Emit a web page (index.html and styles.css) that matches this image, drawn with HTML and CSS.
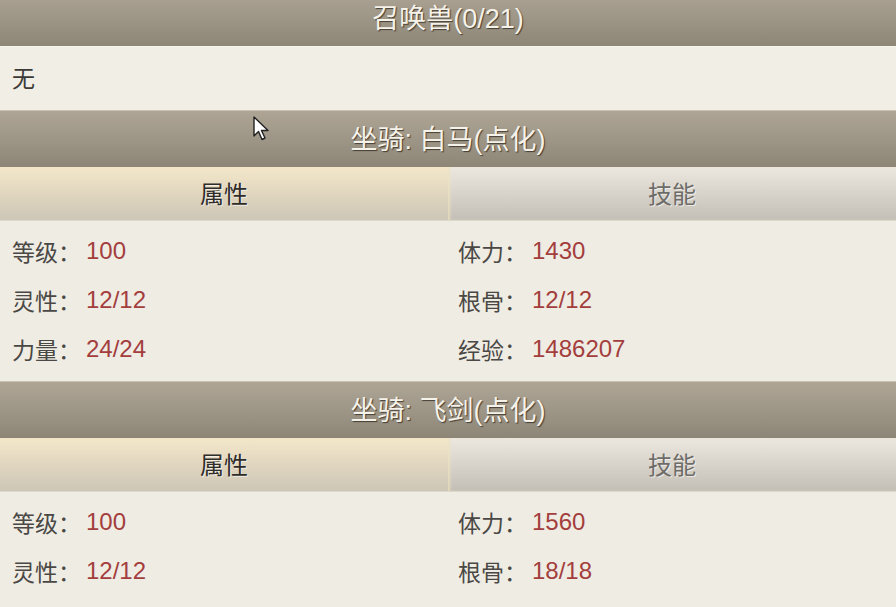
FILE: index.html
```html
<!DOCTYPE html>
<html lang="zh-CN">
<head>
    <meta charset="UTF-8">
    <meta name="viewport" content="width=device-width, initial-scale=1.0">
    <title>召唤兽与坐骑</title>
    <link rel="stylesheet" href="styles.css">
</head>
<body>
    <div class="panel">
        <div class="bar bar-first">召唤兽(0/21)</div>
        <div class="empty">无</div>

        <div class="bar">坐骑: 白马(点化)</div>
        <div class="tabs">
            <div class="tab active">属性</div>
            <div class="tab">技能</div>
        </div>
        <div class="stats">
            <div class="stat"><span class="label">等级：</span><span class="value">100</span></div>
            <div class="stat right"><span class="label">体力：</span><span class="value">1430</span></div>
            <div class="stat"><span class="label">灵性：</span><span class="value">12/12</span></div>
            <div class="stat right"><span class="label">根骨：</span><span class="value">12/12</span></div>
            <div class="stat"><span class="label">力量：</span><span class="value">24/24</span></div>
            <div class="stat right"><span class="label">经验：</span><span class="value">1486207</span></div>
        </div>

        <div class="bar">坐骑: 飞剑(点化)</div>
        <div class="tabs">
            <div class="tab active">属性</div>
            <div class="tab">技能</div>
        </div>
        <div class="stats">
            <div class="stat"><span class="label">等级：</span><span class="value">100</span></div>
            <div class="stat right"><span class="label">体力：</span><span class="value">1560</span></div>
            <div class="stat"><span class="label">灵性：</span><span class="value">12/12</span></div>
            <div class="stat right"><span class="label">根骨：</span><span class="value">18/18</span></div>
            <div class="stat"><span class="label">力量：</span><span class="value">24/24</span></div>
            <div class="stat right"><span class="label">经验：</span><span class="value">1486207</span></div>
        </div>
    </div>

    <!-- mouse pointer captured in the screenshot -->
    <svg class="pointer" width="18" height="26" viewBox="0 0 18 26">
        <path d="M1 1 L1 20 L5.5 15.5 L9 23.5 L12 22 L8.5 14.5 L15 14.5 Z" fill="#fff" stroke="#222" stroke-width="1.4" stroke-linejoin="round"/>
    </svg>
</body>
</html>
```

FILE: styles.css
```css
:root {
    --bar-top: #aea595;
    --bar-bottom: #8d8677;
    --bg: #efece4;
    --label: #4a4845;
    --value: #a33e3d;
}

html, body {
    margin: 0;
    padding: 0;
    overflow: hidden;
}

body {
    font-family: "Liberation Sans", "Noto Sans CJK SC", sans-serif;
    background-color: var(--bg);
    color: var(--label);
    width: 896px;
    height: 607px;
    position: relative;
}

.panel {
    display: flex;
    flex-direction: column;
}

.bar {
    height: 57px;
    display: flex;
    align-items: center;
    justify-content: center;
    padding-bottom: 4px;
    background: linear-gradient(to bottom, var(--bar-top), var(--bar-bottom));
    border-top: 1px solid #c9c1b2;
    box-sizing: border-box;
    color: #f5f2ea;
    font-size: 27px;
    text-shadow: 1px 1px 1px rgba(40, 34, 26, 0.75);
}

/* list is scrolled a little, first bar is cut at the top */
.bar-first {
    margin-top: -11px;
}

.empty {
    height: 64px;
    display: flex;
    align-items: center;
    padding-left: 12px;
    padding-bottom: 3px;
    font-size: 23px;
    color: #3c3a37;
    background-color: #f1eee6;
    border-top: 1px solid #f8f5ee;
    box-sizing: border-box;
}

.tabs {
    display: grid;
    grid-template-columns: 1fr 1fr;
    height: 53px;
    border-bottom: 1px solid #ddd8cc;
}

.tab {
    display: flex;
    align-items: center;
    justify-content: center;
    padding-bottom: 2px;
    font-size: 24px;
    color: #6e6c68;
    background: linear-gradient(to bottom, #ece8df, #c3bfb6);
    text-shadow: 1px 1px 0 rgba(255, 255, 255, 0.6);
}

.tab.active {
    color: #2f2d2a;
    background: linear-gradient(to bottom, #f4e7c9, #cdc6b6);
}

.tab + .tab {
    box-shadow: inset 3px 0 3px -1px rgba(240, 226, 190, 0.8);
}

.stats {
    display: grid;
    grid-template-columns: 1fr 1fr;
    grid-auto-rows: 49px;
    padding: 5px 0 8px;
}

.stat {
    display: flex;
    align-items: center;
    padding-left: 12px;
    font-size: 23px;
}

.stat.right {
    padding-left: 10px;
}

.label {
    color: var(--label);
}

.value {
    color: var(--value);
    font-size: 24px;
    margin-left: 5px;
}

.pointer {
    position: absolute;
    left: 253px;
    top: 116px;
}
```
